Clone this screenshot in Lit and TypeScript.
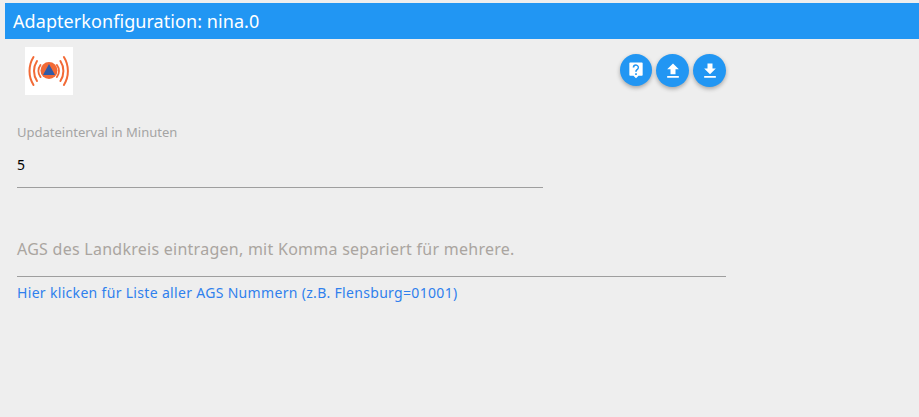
import { LitElement, html, css } from "lit";
import { customElement } from "lit/decorators.js";

@customElement("app-root")
export class AppRoot extends LitElement {
  static styles = css`
    :host {
      display: block;
      height: 417px;
      overflow: hidden;
      background: #eeeeee;
      padding: 3px 0 0 5px;
      box-sizing: border-box;
      font-family: "Noto Sans", "Open Sans", sans-serif;
    }
    .title {
      height: 36px;
      background: #2196f3;
      color: #fff;
      font-size: 18px;
      letter-spacing: 0.07px;
      line-height: 36px;
      padding-left: 8px;
    }
    .content {
      width: 721px;
      padding-left: 12px;
      box-sizing: border-box;
    }
    .top {
      display: flex;
      justify-content: space-between;
      padding: 8px 0 0 8px;
      height: 48px;
    }
    .logo {
      width: 48px;
      height: 48px;
      background: #fff;
      display: block;
    }
    .buttons {
      display: flex;
      gap: 4px;
      padding-top: 7px;
    }
    .fab {
      width: 33px;
      height: 33px;
      border-radius: 50%;
      background: #2196f3;
      box-shadow: 0 2px 4px rgba(0, 0, 0, 0.3);
      display: flex;
      align-items: center;
      justify-content: center;
    }
    .fab.first {
      width: 32px;
      height: 32px;
    }
    .fab svg {
      width: 20px;
      height: 20px;
      fill: #fff;
      display: block;
    }
    .interval {
      width: 526px;
      margin-top: 29px;
      border-bottom: 1px solid #9e9e9e;
      height: 63px;
    }
    .label {
      color: #a4a4a4;
      font-size: 13px;
      line-height: 16px;
    }
    .value {
      color: #000;
      font-size: 14px;
      line-height: 20px;
      margin-top: 15px;
    }
    .ags {
      margin-top: 49px;
      height: 40px;
      border-bottom: 1px solid #9e9e9e;
      color: #aaa5a0;
      font-size: 16px;
      letter-spacing: 0.26px;
      line-height: 24px;
      box-sizing: border-box;
    }
    .link {
      display: block;
      margin-top: 7px;
      color: #2f80ed;
      font-size: 14px;
      letter-spacing: 0.32px;
      line-height: 18px;
      text-decoration: none;
    }
  `;

  render() {
    return html`
      <div class="title">Adapterkonfiguration: nina.0</div>
      <div class="content">
        <div class="top">
          <svg class="logo" viewBox="0 0 48 48" fill="none">
            <g stroke="#f26a36" stroke-width="2" stroke-linecap="round">
              <path d="M15.5 18A10 10 0 0 0 15.5 30" />
              <path d="M12 14A18.2 18.2 0 0 0 12 34" />
              <path d="M8.5 10A26.5 26.5 0 0 0 8.5 38" />
              <path d="M31.9 18A10 10 0 0 1 31.9 30" />
              <path d="M35.4 14A18.2 18.2 0 0 1 35.4 34" />
              <path d="M38.9 10A26.5 26.5 0 0 1 38.9 38" />
            </g>
            <circle cx="24" cy="23.5" r="8.5" fill="#f26a36" />
            <path d="M24 17 30 28H18Z" fill="#2f5ba8" />
          </svg>
          <div class="buttons">
            <div class="fab first">
              <svg viewBox="0 0 24 24"><path fill-rule="evenodd" d="M5 3h14a1 1 0 0 1 1 1v14a1 1 0 0 1-1 1h-4l-3 3-3-3H5a1 1 0 0 1-1-1V4a1 1 0 0 1 1-1Zm6 13v2h2v-2h-2Zm1-11a4 4 0 0 0-4 4h2a2 2 0 1 1 3.2 1.6c-1.2.9-2.2 1.7-2.2 3.4h2c0-1 .6-1.5 1.5-2.2A4 4 0 0 0 12 5Z" /></svg>
            </div>
            <div class="fab">
              <svg viewBox="0 0 24 24"><path d="M9 16h6v-6h4l-7-7-7 7h4v6Zm-4 2h14v2H5v-2Z" /></svg>
            </div>
            <div class="fab">
              <svg viewBox="0 0 24 24"><path d="M19 9h-4V3H9v6H5l7 7 7-7ZM5 18v2h14v-2H5Z" /></svg>
            </div>
          </div>
        </div>
        <div class="interval">
          <div class="label">Updateinterval in Minuten</div>
          <div class="value">5</div>
        </div>
        <div class="ags">AGS des Landkreis eintragen, mit Komma separiert für mehrere.</div>
        <a class="link" href="#">Hier klicken für Liste aller AGS Nummern (z.B. Flensburg=01001)</a>
      </div>
    `;
  }
}
